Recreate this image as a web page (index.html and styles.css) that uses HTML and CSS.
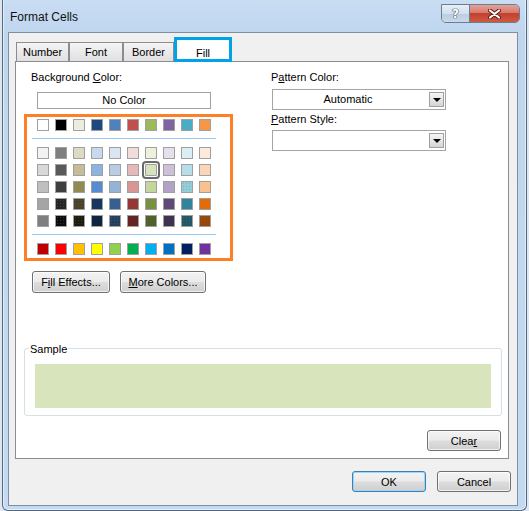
FILE: index.html
```html
<!DOCTYPE html>
<html>
<head>
<meta charset="utf-8">
<title>Format Cells</title>
<link rel="stylesheet" href="styles.css">
</head>
<body>
<div class="window">
  <div class="titlebar">
    <span class="title">Format Cells</span>
    <div class="caption-btns">
      <span class="cbtn help">?</span>
      <span class="cbtn close">
        <svg width="13" height="10" viewBox="0 0 13 10">
          <path d="M2 1.5 L11 8.5 M11 1.5 L2 8.5" stroke="#5a1c14" stroke-width="4" stroke-linecap="round"/>
          <path d="M2 1.5 L11 8.5 M11 1.5 L2 8.5" stroke="#ffffff" stroke-width="2.2" stroke-linecap="round"/>
        </svg>
      </span>
    </div>
  </div>
  <div class="client">
    <div class="tabs">
      <div class="tab t-number">Number</div>
      <div class="tab t-font">Font</div>
      <div class="tab t-border">Border</div>
      <div class="tab t-fill">Fill</div>
    </div>
    <div class="panel">
      <div class="cols">
        <div class="col-left">
          <div class="label indent">Background <u>C</u>olor:</div>
          <div class="nocolor">No Color</div>
          <div class="palette">
            <div class="srow">
              <span class="sw" style="background:#ffffff"></span><span class="sw" style="background:#000000"></span><span class="sw" style="background:#eeece1"></span><span class="sw" style="background:#1f497d"></span><span class="sw" style="background:#4f81bd"></span><span class="sw" style="background:#c0504d"></span><span class="sw" style="background:#9bbb59"></span><span class="sw" style="background:#8064a2"></span><span class="sw" style="background:#4bacc6"></span><span class="sw" style="background:#f79646"></span>
            </div>
            <div class="sep"></div>
            <div class="theme">
              <div class="srow">
                <span class="sw" style="background:#f2f2f2"></span><span class="sw" style="background:#7f7f7f"></span><span class="sw" style="background:#ddd9c3"></span><span class="sw" style="background:#c6d9f0"></span><span class="sw" style="background:#dbe5f1"></span><span class="sw" style="background:#f2dcdb"></span><span class="sw" style="background:#ebf1dd"></span><span class="sw" style="background:#e5e0ec"></span><span class="sw" style="background:#dbeef3"></span><span class="sw" style="background:#fdeada"></span>
              </div>
              <div class="srow">
                <span class="sw" style="background:#d8d8d8"></span><span class="sw" style="background:#595959"></span><span class="sw" style="background:#c4bd97"></span><span class="sw" style="background:#8db3e2"></span><span class="sw" style="background:#b8cce4"></span><span class="sw" style="background:#e5b9b7"></span><span class="sw sel" style="background:#d7e3bc"></span><span class="sw" style="background:#ccc1d9"></span><span class="sw" style="background:#b7dde8"></span><span class="sw" style="background:#fbd5b5"></span>
              </div>
              <div class="srow">
                <span class="sw" style="background:#bfbfbf"></span><span class="sw" style="background:#3f3f3f"></span><span class="sw" style="background:#938953"></span><span class="sw dots" style="background-color:#548dd4"></span><span class="sw" style="background:#95b3d7"></span><span class="sw" style="background:#d99694"></span><span class="sw" style="background:#c3d69b"></span><span class="sw" style="background:#b2a2c7"></span><span class="sw dots" style="background-color:#92cddc"></span><span class="sw" style="background:#fac08f"></span>
              </div>
              <div class="srow">
                <span class="sw" style="background:#a5a5a5"></span><span class="sw dots" style="background-color:#262626"></span><span class="sw dots" style="background-color:#494429"></span><span class="sw" style="background:#17365d"></span><span class="sw" style="background:#366092"></span><span class="sw" style="background:#953734"></span><span class="sw" style="background:#76923c"></span><span class="sw" style="background:#5f497a"></span><span class="sw" style="background:#31859b"></span><span class="sw" style="background:#e36c09"></span>
              </div>
              <div class="srow">
                <span class="sw" style="background:#7f7f7f"></span><span class="sw dots" style="background-color:#0c0c0c"></span><span class="sw dots" style="background-color:#1d1b10"></span><span class="sw" style="background:#0f243e"></span><span class="sw dots" style="background-color:#244061"></span><span class="sw" style="background:#632423"></span><span class="sw dots" style="background-color:#4f6128"></span><span class="sw" style="background:#3f3151"></span><span class="sw dots" style="background-color:#205867"></span><span class="sw dots" style="background-color:#974806"></span>
              </div>
            </div>
            <div class="sep"></div>
            <div class="srow">
              <span class="sw" style="background:#c00000"></span><span class="sw" style="background:#ff0000"></span><span class="sw" style="background:#ffc000"></span><span class="sw" style="background:#ffff00"></span><span class="sw" style="background:#92d050"></span><span class="sw" style="background:#00b050"></span><span class="sw" style="background:#00b0f0"></span><span class="sw" style="background:#0070c0"></span><span class="sw" style="background:#002060"></span><span class="sw" style="background:#7030a0"></span>
            </div>
          </div>
          <div class="btnrow">
            <button class="btn w-fill">F<u>i</u>ll Effects...</button>
            <button class="btn w-more"><u>M</u>ore Colors...</button>
          </div>
        </div>
        <div class="col-right">
          <div class="label">P<u>a</u>ttern Color:</div>
          <div class="combo"><span class="combo-text">Automatic</span><span class="drop"><span class="tri"></span></span></div>
          <div class="label gap3"><u>P</u>attern Style:</div>
          <div class="combo gap4"><span class="combo-text"></span><span class="drop"><span class="tri"></span></span></div>
        </div>
      </div>
      <div class="group">
        <div class="group-label">Sample</div>
        <div class="sample"></div>
      </div>
      <div class="clear-row">
        <button class="btn w-clear">Clea<u>r</u></button>
      </div>
    </div>
    <div class="footer">
      <button class="btn default w-ok">OK</button>
      <button class="btn w-ok">Cancel</button>
    </div>
  </div>
</div>
</body>
</html>
```

FILE: styles.css
```css
* { box-sizing: border-box; }

html, body {
  margin: 0;
  padding: 0;
}

body {
  width: 529px;
  height: 511px;
  overflow: hidden;
  background: #dde7f2;
  font-family: "Liberation Sans", Arial, sans-serif;
  font-size: 11px;
  color: #000;
}

u { text-decoration: underline; text-underline-offset: 1px; }

.window {
  margin-left: 2px;
  width: 525px;
  height: 511px;
  border: 1px solid #56687c;
  border-top: none;
  border-radius: 0 0 6px 6px;
  background: linear-gradient(180deg, #c9ddf3 0px, #bfd6ef 32px, #c4daf2 100%);
  box-shadow: inset 1px 0 0 rgba(255,255,255,0.55), inset -1px 0 0 rgba(255,255,255,0.55), inset 0 -1px 0 rgba(255,255,255,0.55);
  display: flex;
  flex-direction: column;
}

.titlebar {
  height: 32px;
  display: flex;
  justify-content: space-between;
  align-items: flex-start;
  flex: none;
}

.title {
  padding: 10px 0 0 7px;
  font-size: 12px;
  line-height: 15px;
  color: #111;
}

.caption-btns {
  display: flex;
  margin: 4px 6px 0 0;
  border: 1px solid #6b7d92;
  border-radius: 0 5px 5px 5px;
  overflow: hidden;
  height: 19px;
}

.cbtn {
  display: flex;
  align-items: center;
  justify-content: center;
  height: 100%;
}

.help {
  width: 28px;
  background: linear-gradient(180deg, #e6eef8 0%, #d3e0ee 50%, #bccde1 51%, #c9d8ea 100%);
  border-right: 1px solid #6b7d92;
  color: #ffffff;
  font-family: "DejaVu Sans", sans-serif;
  font-weight: bold;
  font-size: 12px;
  line-height: 16px;
  text-shadow: 0 0 1px #3c4a5a, 0 0 1px #3c4a5a, 0 0 1px #3c4a5a;
}

.close {
  width: 49px;
  background: linear-gradient(180deg, #e3a398 0%, #d77a6c 45%, #c4402f 50%, #cf5a40 100%);
}

.client {
  flex: 1;
  margin: 0 8px 4px 5px;
  border: 1px solid #7f8fa2;
  background: #f0f0f0;
  display: flex;
  flex-direction: column;
}

/* tabs */
.tabs {
  height: 28px;
  padding-left: 7px;
  display: flex;
  align-items: flex-end;
  flex: none;
}

.tab {
  height: 19px;
  border: 1px solid #898c95;
  border-bottom: none;
  background: linear-gradient(180deg, #f4f4f4 0%, #eaeaea 50%, #e0e0e0 100%);
  text-align: center;
  padding-top: 3px;
  line-height: 13px;
  font-size: 11px;
}

.t-number { width: 53px; }
.t-font { width: 54px; }
.t-border { width: 51px; }

.t-fill {
  position: relative;
  z-index: 1;
  width: 58px;
  height: 25px;
  margin-bottom: -1px;
  border: 3px solid #00a2e8;
  background: #fff;
  padding-top: 6px;
  line-height: 15px;
}

/* panel */
.panel {
  height: 398px;
  flex: none;
  margin: 0 8px 0 6px;
  border: 1px solid #898c95;
  background: #fff;
  padding: 9px 6px 0 8px;
}

.cols {
  display: grid;
  grid-template-columns: 247px 1fr;
}

.label {
  line-height: 13px;
  font-size: 11px;
}

.indent { margin-left: 7px; }
.gap3 { margin-top: 3px; }

.nocolor {
  margin: 8px 0 0 13px;
  width: 174px;
  height: 17px;
  border: 1px solid #a0a0a0;
  text-align: center;
  line-height: 15px;
  font-size: 11px;
}

.palette {
  margin-top: 5px;
  width: 209px;
  border: 3px solid #ff7f27;
  padding: 2px 0 3px 10px;
}

.srow {
  display: flex;
  gap: 6px;
}

.theme {
  display: flex;
  flex-direction: column;
  gap: 5px;
}

.sep {
  height: 1px;
  width: 184px;
  margin: 7px 0 8px -5px;
  background: #9dc8f2;
}

.sw {
  display: block;
  width: 12px;
  height: 12px;
  border: 1px solid #a0a0a0;
}

.sw.sel {
  outline: 2px solid #6a6a6a;
  outline-offset: 1px;
  border-radius: 1px;
}

.sw.dots {
  background-image: radial-gradient(circle, rgba(140,110,90,0.35) 0.5px, transparent 0.8px);
  background-size: 3px 3px;
}

.btnrow {
  margin: 10px 0 0 8px;
  display: flex;
  gap: 10px;
}

.btn {
  height: 22px;
  padding: 0;
  border: 1px solid #707070;
  border-radius: 3px;
  background: linear-gradient(180deg, #f3f3f3 0%, #ebebeb 48%, #dddddd 52%, #cfcfcf 100%);
  box-shadow: inset 0 0 0 1px rgba(255,255,255,0.7);
  font-family: "Liberation Sans", Arial, sans-serif;
  font-size: 11px;
  color: #000;
  text-align: center;
  line-height: 18px;
}

.w-fill { width: 78px; }
.w-more { width: 86px; }
.w-clear { width: 74px; height: 21px; margin-right: 1px; }
.w-ok { width: 74px; height: 21px; }

.btn.default {
  border-color: #3c7fb1;
  box-shadow: inset 0 0 0 1px #9ed6f8;
}

.combo {
  margin: 5px 0 0 1px;
  width: 174px;
  height: 21px;
  border: 1px solid #a5a5a5;
  background: #fff;
  display: flex;
  padding: 2px 1px 2px 2px;
}

.combo.gap4 { margin-top: 4px; }

.combo-text {
  flex: 1;
  text-align: center;
  line-height: 15px;
  font-size: 11px;
  padding-right: 8px;
}

.drop {
  width: 15px;
  border: 1px solid #a0a0a0;
  background: linear-gradient(180deg, #f6f6f6 0%, #e6e6e6 50%, #d4d4d4 100%);
  display: flex;
  align-items: center;
  justify-content: center;
}

.tri {
  width: 0;
  height: 0;
  border-left: 4px solid transparent;
  border-right: 4px solid transparent;
  border-top: 4px solid #000;
  margin-top: 1px;
}

/* sample group */
.group {
  margin-top: 55px;
  height: 68px;
  border: 1px solid #d5dfe5;
  border-radius: 3px;
  padding: 0 10px 7px 10px;
}

.group-label {
  display: table;
  margin: -6px 0 0 -6px;
  padding: 0 1px;
  background: #fff;
  line-height: 13px;
  font-size: 11px;
}

.sample {
  margin-top: 8px;
  height: 44px;
  background: #d8e4bc;
}

.clear-row {
  margin-top: 14px;
  display: flex;
  justify-content: flex-end;
}

.footer {
  display: flex;
  justify-content: flex-end;
  gap: 11px;
  padding: 12px 6px 0 0;
}
```
